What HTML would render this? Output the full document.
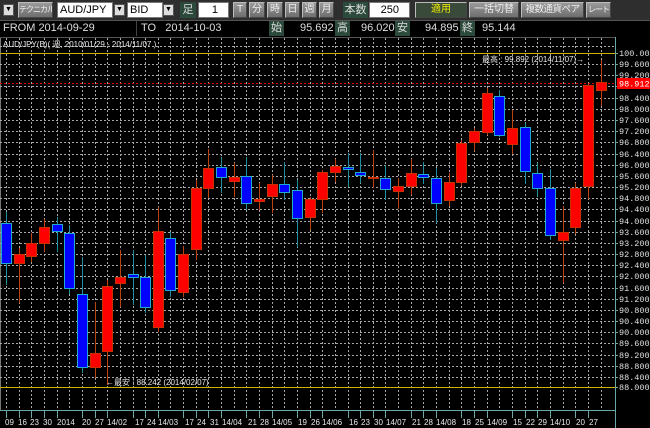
<!DOCTYPE html>
<html><head><meta charset="utf-8"><style>
*{margin:0;padding:0;box-sizing:border-box}
body{width:650px;height:428px;background:#000;position:relative;overflow:hidden;font-family:"Liberation Sans","Noto Sans CJK JP",sans-serif}
.a{position:absolute}
#tb{left:0;top:0;width:650px;height:20px;background:#2e2e2e}
.btn{position:absolute;top:2px;height:16px;background:linear-gradient(#9a9a9a,#6e6e6e);border:1px solid #bbb;border-right-color:#444;border-bottom-color:#444;color:#eee;font-size:10px;line-height:14px;text-align:center;white-space:nowrap;overflow:hidden}
.inp{position:absolute;top:2px;height:16px;background:#fff;border:1px solid #777;color:#000;font-size:11px;line-height:14px;padding-left:2px}
.lbl{position:absolute;height:16px;background:#2c4a3c;color:#ddd;font-size:11px;line-height:16px;text-align:center;white-space:nowrap}
.dd{position:absolute;top:4px;width:11px;height:12px;background:#ddd;border:1px solid #555;font-size:7px;line-height:10px;text-align:center;color:#000}
#r2{left:0;top:20px;width:650px;height:17px;background:#000}
.f{position:absolute;top:21px;height:15px;color:#ddd;font-size:11px;line-height:15px}
</style></head><body>
<div id="tb" class="a">
<div class="dd" style="left:3px;top:4px">▼</div>
<div class="btn" style="left:18px;width:35px;font-size:8px;letter-spacing:-1px">テクニカル</div>
<div class="inp" style="left:57px;width:56px">AUD/JPY</div>
<div class="dd" style="left:114px">▼</div>
<div class="inp" style="left:127px;width:36px">BID</div>
<div class="dd" style="left:163px">▼</div>
<div class="lbl" style="left:180px;top:2px;width:16px">足</div>
<div class="inp" style="left:198px;width:31px;text-align:right;padding-right:10px">1</div>
<div class="btn" style="left:233px;width:14px">T</div>
<div class="btn" style="left:249px;width:16px">分</div>
<div class="btn" style="left:267px;width:16px">時</div>
<div class="btn" style="left:285px;width:15px">日</div>
<div class="btn" style="left:302px;width:15px">週</div>
<div class="btn" style="left:319px;width:15px">月</div>
<div class="lbl" style="left:343px;top:2px;width:25px">本数</div>
<div class="inp" style="left:369px;width:41px;text-align:right;padding-right:10px">250</div>
<div class="btn" style="left:415px;width:52px;background:#3a4a3a;color:#ee0">適用</div>
<div class="btn" style="left:469px;width:50px">一括切替</div>
<div class="btn" style="left:521px;width:63px;font-size:9.5px;letter-spacing:-0.5px">複数通貨ペア</div>
<div class="btn" style="left:586px;width:25px;font-size:8px;letter-spacing:-1px">レート</div>
</div>
<div id="r2" class="a"></div>
<div class="a" style="left:0;top:20px;width:650px;height:1px;background:#555"></div>
<div class="f" style="left:3px;width:134px;border-right:1px solid #444">FROM 2014-09-29</div>
<div class="f" style="left:141px">TO&nbsp;&nbsp;&nbsp;2014-10-03</div>
<div class="lbl" style="left:269px;top:21px;width:15px;height:15px;line-height:15px">始</div>
<div class="f" style="left:300px">95.692</div>
<div class="lbl" style="left:335px;top:21px;width:15px;height:15px;line-height:15px">高</div>
<div class="f" style="left:361px">96.020</div>
<div class="lbl" style="left:395px;top:21px;width:15px;height:15px;line-height:15px">安</div>
<div class="f" style="left:425px">94.895</div>
<div class="lbl" style="left:460px;top:21px;width:15px;height:15px;line-height:15px">終</div>
<div class="f" style="left:482px">95.144</div>
<svg class="a" style="left:0;top:0" width="650" height="428" viewBox="0 0 650 428">
<rect x="0" y="37" width="650" height="391" fill="#000"/>
<line x1="0.5" y1="37" x2="0.5" y2="411" stroke="#777"/>
<line x1="0" y1="37.5" x2="616" y2="37.5" stroke="#555"/>
<g stroke="#a8a8a8" stroke-dasharray="2,2" stroke-width="1">
<path d="M6.5 38V411M19.5 38V411M31.5 38V411M44.5 38V411M57.5 38V411M69.5 38V411M82.5 38V411M95.5 38V411M107.5 38V411M120.5 38V411M133.5 38V411M145.5 38V411M158.5 38V411M170.5 38V411M183.5 38V411M196.5 38V411M208.5 38V411M221.5 38V411M234.5 38V411M246.5 38V411M259.5 38V411M272.5 38V411M284.5 38V411M297.5 38V411M310.5 38V411M322.5 38V411M335.5 38V411M348.5 38V411M360.5 38V411M373.5 38V411M385.5 38V411M398.5 38V411M411.5 38V411M423.5 38V411M436.5 38V411M449.5 38V411M461.5 38V411M474.5 38V411M487.5 38V411M499.5 38V411M512.5 38V411M525.5 38V411M537.5 38V411M550.5 38V411M563.5 38V411M575.5 38V411M588.5 38V411M601.5 38V411"/>
<path d="M0 64.5H615M0 75.5H615M0 86.5H615M0 98.5H615M0 109.5H615M0 120.5H615M0 131.5H615M0 142.5H615M0 154.5H615M0 165.5H615M0 176.5H615M0 187.5H615M0 198.5H615M0 209.5H615M0 221.5H615M0 232.5H615M0 243.5H615M0 254.5H615M0 265.5H615M0 276.5H615M0 288.5H615M0 299.5H615M0 310.5H615M0 321.5H615M0 332.5H615M0 343.5H615M0 355.5H615M0 366.5H615M0 377.5H615M0 46.5H615"/>
</g>
<line x1="0" y1="53.5" x2="615" y2="53.5" stroke="#c8b400"/>
<line x1="0" y1="387.5" x2="615" y2="387.5" stroke="#c8b400"/>
<line x1="0" y1="83.5" x2="616" y2="83.5" stroke="#d00" stroke-dasharray="2,2"/>
<g stroke="#c04010" stroke-width="1"><path d="M19.5 248V303M31.5 233V262M44.5 219V252M95.5 302V378M107.5 280V385M120.5 250V307M158.5 207V332M183.5 246V297M196.5 180V260M208.5 149V198M234.5 163V197M259.5 183V210M272.5 175V213M310.5 197V230M322.5 170V213M335.5 159V182M373.5 150V188M398.5 178V209M411.5 159V195M449.5 173V206M461.5 140V186M474.5 128V151M487.5 88V135M512.5 110V154M563.5 206V283M575.5 183V234M588.5 83V199M601.5 60V106"/></g>
<g stroke="#2090a0" stroke-width="1"><path d="M6.5 212V285M57.5 217V252M69.5 225V294M82.5 257V373M133.5 250V305M145.5 255V313M170.5 232V297M221.5 157V193M246.5 157V210M284.5 162V200M297.5 180V247M348.5 153V187M360.5 153V183M385.5 165V200M423.5 162V184M436.5 168V223M499.5 90V137M525.5 123V184M537.5 163V197M550.5 169V240"/></g>
<g fill="#f00" stroke="#c83000"><rect x="14.5" y="254.5" width="10" height="9"/><rect x="26.5" y="243.5" width="10" height="13"/><rect x="39.5" y="227.5" width="10" height="16"/><rect x="90.5" y="353.5" width="10" height="14"/><rect x="102.5" y="286.5" width="10" height="65"/><rect x="115.5" y="277.5" width="10" height="6"/><rect x="153.5" y="231.5" width="10" height="96"/><rect x="178.5" y="254.5" width="10" height="38"/><rect x="191.5" y="188.5" width="10" height="61"/><rect x="203.5" y="168.5" width="10" height="20"/><rect x="229.5" y="177.5" width="10" height="4"/><rect x="254.5" y="199.5" width="10" height="2"/><rect x="267.5" y="184.5" width="10" height="12"/><rect x="305.5" y="199.5" width="10" height="18"/><rect x="317.5" y="172.5" width="10" height="27"/><rect x="330.5" y="166.5" width="10" height="6"/><rect x="368.5" y="177.5" width="10" height="1"/><rect x="393.5" y="186.5" width="10" height="5"/><rect x="406.5" y="173.5" width="10" height="13"/><rect x="444.5" y="182.5" width="10" height="18"/><rect x="456.5" y="143.5" width="10" height="39"/><rect x="469.5" y="131.5" width="10" height="11"/><rect x="482.5" y="93.5" width="10" height="39"/><rect x="507.5" y="128.5" width="10" height="16"/><rect x="558.5" y="232.5" width="10" height="8"/><rect x="570.5" y="188.5" width="10" height="39"/><rect x="583.5" y="85.5" width="10" height="101"/><rect x="596.5" y="82.5" width="10" height="8"/></g>
<g fill="#00f" stroke="#20a8d0"><rect x="1.5" y="223.5" width="10" height="40"/><rect x="52.5" y="224.5" width="10" height="7"/><rect x="64.5" y="233.5" width="10" height="55"/><rect x="77.5" y="294.5" width="10" height="73"/><rect x="128.5" y="274.5" width="10" height="3"/><rect x="140.5" y="277.5" width="10" height="30"/><rect x="165.5" y="238.5" width="10" height="52"/><rect x="216.5" y="167.5" width="10" height="10"/><rect x="241.5" y="176.5" width="10" height="27"/><rect x="279.5" y="184.5" width="10" height="8"/><rect x="292.5" y="190.5" width="10" height="28"/><rect x="343.5" y="167.5" width="10" height="2"/><rect x="355.5" y="172.5" width="10" height="3"/><rect x="380.5" y="178.5" width="10" height="11"/><rect x="418.5" y="174.5" width="10" height="3"/><rect x="431.5" y="178.5" width="10" height="25"/><rect x="494.5" y="96.5" width="10" height="39"/><rect x="520.5" y="127.5" width="10" height="44"/><rect x="532.5" y="173.5" width="10" height="15"/><rect x="545.5" y="188.5" width="10" height="47"/></g>
<line x1="615.5" y1="37" x2="615.5" y2="428" stroke="#6aa8a8"/>
<line x1="0" y1="410.5" x2="616" y2="410.5" stroke="#6aa8a8"/>
<g stroke="#6aa8a8"><path d="M6.5 411V418M19.5 411V418M31.5 411V418M44.5 411V418M57.5 411V418M82.5 411V418M95.5 411V418M107.5 411V418M133.5 411V418M145.5 411V418M158.5 411V418M183.5 411V418M196.5 411V418M208.5 411V418M221.5 411V418M246.5 411V418M259.5 411V418M272.5 411V418M297.5 411V418M310.5 411V418M322.5 411V418M348.5 411V418M360.5 411V418M373.5 411V418M385.5 411V418M411.5 411V418M423.5 411V418M436.5 411V418M461.5 411V418M474.5 411V418M487.5 411V418M512.5 411V418M525.5 411V418M537.5 411V418M550.5 411V418M575.5 411V418M588.5 411V418"/>
<path d="M615 53.5h3M615 64.5h3M615 75.5h3M615 86.5h3M615 98.5h3M615 109.5h3M615 120.5h3M615 131.5h3M615 142.5h3M615 154.5h3M615 165.5h3M615 176.5h3M615 187.5h3M615 198.5h3M615 209.5h3M615 221.5h3M615 232.5h3M615 243.5h3M615 254.5h3M615 265.5h3M615 276.5h3M615 288.5h3M615 299.5h3M615 310.5h3M615 321.5h3M615 332.5h3M615 343.5h3M615 355.5h3M615 366.5h3M615 377.5h3M615 387.5h3"/></g>
<g fill="#e0e0e0" font-family="Liberation Mono, monospace" font-size="8.5">
<text x="619" y="56">100.000</text><text x="619" y="67">99.600</text><text x="619" y="78">99.200</text><text x="619" y="101">98.400</text><text x="619" y="112">98.000</text><text x="619" y="123">97.600</text><text x="619" y="134">97.200</text><text x="619" y="145">96.800</text><text x="619" y="157">96.400</text><text x="619" y="168">96.000</text><text x="619" y="179">95.600</text><text x="619" y="190">95.200</text><text x="619" y="201">94.800</text><text x="619" y="212">94.400</text><text x="619" y="224">94.000</text><text x="619" y="235">93.600</text><text x="619" y="246">93.200</text><text x="619" y="257">92.800</text><text x="619" y="268">92.400</text><text x="619" y="279">92.000</text><text x="619" y="291">91.600</text><text x="619" y="302">91.200</text><text x="619" y="313">90.800</text><text x="619" y="324">90.400</text><text x="619" y="335">90.000</text><text x="619" y="346">89.600</text><text x="619" y="358">89.200</text><text x="619" y="369">88.800</text><text x="619" y="380">88.400</text><text x="619" y="390">88.000</text>
</g>
<rect x="617" y="78" width="33" height="11" fill="#f00"/>
<text x="619" y="86.5" fill="#fff" font-family="Liberation Mono, monospace" font-size="8.5">98.912</text>
<g fill="#e8e8e8" font-family="Liberation Sans, Noto Sans CJK JP, sans-serif" font-size="8">
<text x="3" y="47">AUD/JPY(B)( 週, 2010/01/29 - 2014/11/07 )</text>
<text x="482" y="62">最高 : 99.892 (2014/11/07)→</text>
<text x="106" y="385">←最安 : 88.242 (2014/02/07)</text>
</g>
<g fill="#e8e8e8" font-family="Liberation Sans, sans-serif" font-size="8">
<text x="5" y="425">09</text><text x="18" y="425">16</text><text x="30" y="425">23</text><text x="43" y="425">30</text><text x="57" y="425">2014</text><text x="82" y="425">20</text><text x="95" y="425">27</text><text x="107" y="425">14/02</text><text x="135" y="425">17</text><text x="147" y="425">24</text><text x="158" y="425">14/03</text><text x="185" y="425">17</text><text x="197" y="425">24</text><text x="210" y="425">31</text><text x="222" y="425">14/04</text><text x="248" y="425">21</text><text x="260" y="425">28</text><text x="272" y="425">14/05</text><text x="298" y="425">19</text><text x="311" y="425">26</text><text x="322" y="425">14/06</text><text x="349" y="425">16</text><text x="361" y="425">23</text><text x="374" y="425">30</text><text x="386" y="425">14/07</text><text x="412" y="425">21</text><text x="424" y="425">28</text><text x="436" y="425">14/08</text><text x="462" y="425">18</text><text x="475" y="425">25</text><text x="487" y="425">14/09</text><text x="513" y="425">15</text><text x="526" y="425">22</text><text x="538" y="425">29</text><text x="550" y="425">14/10</text><text x="576" y="425">20</text><text x="589" y="425">27</text>
</g>
</svg>
</body></html>
